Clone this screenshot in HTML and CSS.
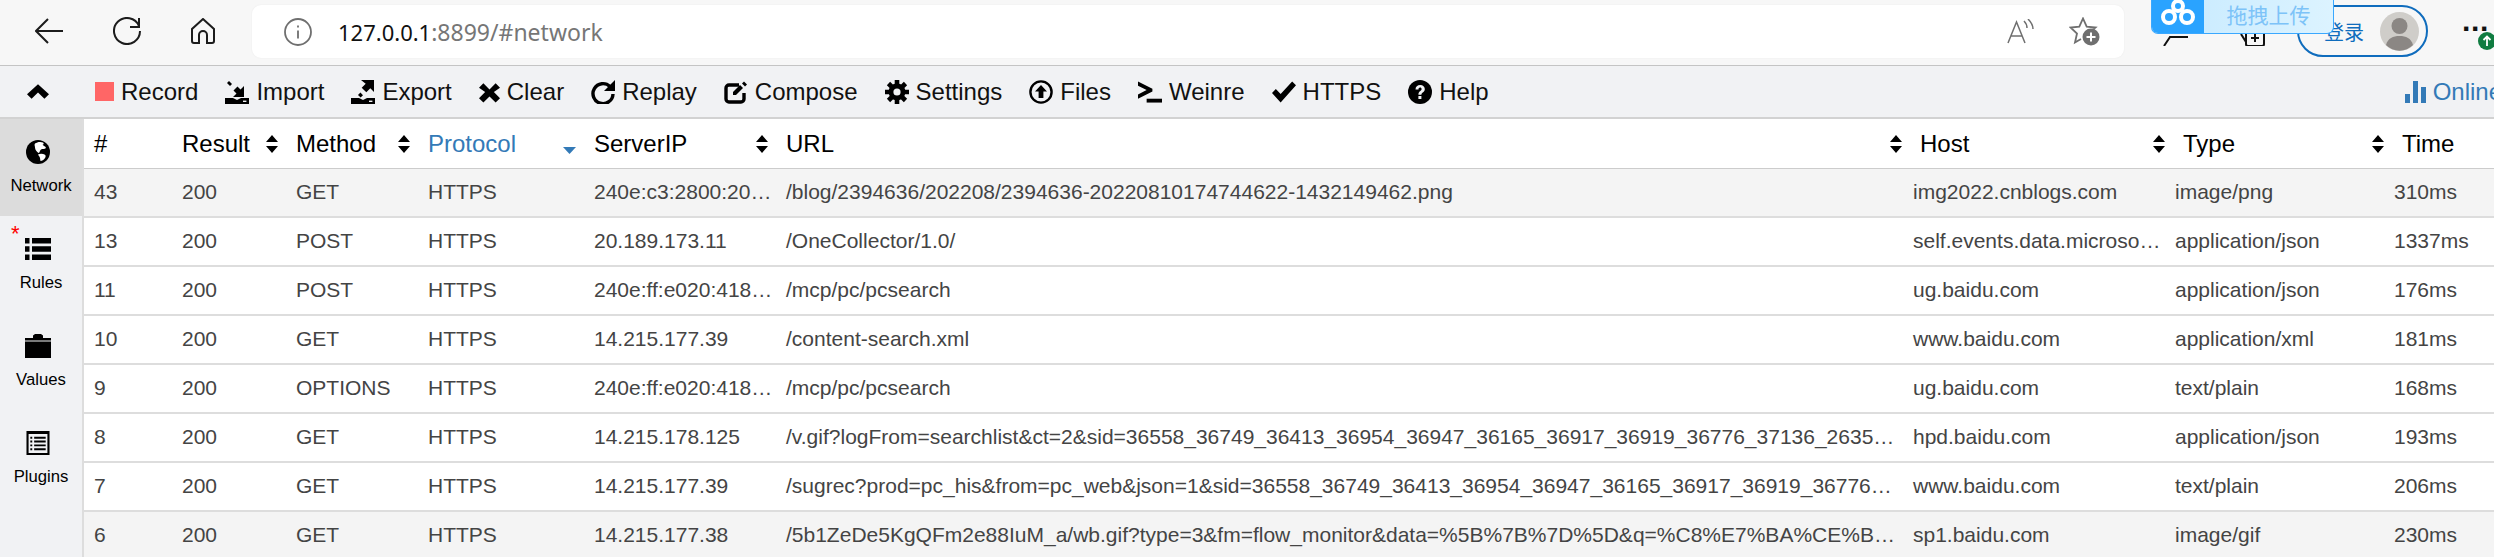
FILE: index.html
```html
<!DOCTYPE html>
<html lang="en">
<head>
<meta charset="utf-8">
<title>Whistle</title>
<link rel="stylesheet" href="styles.css">
</head>
<body>
<svg class="sprites" aria-hidden="true">
  <symbol id="i-chev" viewBox="0 0 24 16"><path d="M12 0 L24 11 L19 16 L12 9 L5 16 L0 11 Z"/></symbol>
  <symbol id="i-import" viewBox="0 0 24 24"><path d="M0 18h8l4 2 4-2h8v6H0z"/><rect x="18" y="20.6" width="3.4" height="1.4" fill="#f1f2f4"/><path d="M19 6v11H8l3.5-3.5-3-3 4-4 3 3z"/><path d="M2 3l2-2 3 3-2 2z"/></symbol>
  <symbol id="i-export" viewBox="0 0 24 24"><path d="M0 18h8l4 2 4-2h8v6H0z"/><rect x="18" y="20.6" width="3.4" height="1.4" fill="#f1f2f4"/><path d="M10 0h13v12l-3.7-3.7-4 4-4.6-4.6 4-4z"/><path d="M7 15l2.4-2.4 2.6 2.6-2.4 2.4z"/></symbol>
  <symbol id="i-x" viewBox="0 0 24 24"><path d="M5 2l7 7 7-7 5 5-7 5 7 7-5 5-7-7-7 7-5-5 7-7-7-5z"/></symbol>
  <symbol id="i-repeat" viewBox="0 0 24 24"><path d="M19 6.5A10 10 0 1 0 22 14" fill="none" stroke="#000" stroke-width="3.4"/><path d="M24 0v11H13z"/></symbol>
  <symbol id="i-edit" viewBox="0 0 24 24"><path d="M15 5H5a3 3 0 0 0-3 3v11a3 3 0 0 0 3 3h12a3 3 0 0 0 3-3v-6" fill="none" stroke="#000" stroke-width="3.4"/><path d="M9 12l7-7 3 3-7 7H9z"/><path d="M20 1.5l3 3-2 2-3-3z"/></symbol>
  <symbol id="i-cog" viewBox="0 0 24 24"><g stroke="#000" stroke-width="4.6"><path d="M12 0v24M0 12h24M3.5 3.5l17 17M20.5 3.5l-17 17"/></g><circle cx="12" cy="12" r="8.4"/><circle cx="12" cy="12" r="3.6" fill="#f1f2f4"/></symbol>
  <symbol id="i-upc" viewBox="0 0 24 24"><circle cx="12" cy="12" r="10.6" fill="none" stroke="#000" stroke-width="2.4"/><path d="M12 5l6 6.5h-3.6V18H9.600v-6.500H6z"/></symbol>
  <symbol id="i-console" viewBox="0 0 25 22"><path d="M0 0l15 7.500v3L0 18v-4.500L9 9 0 4.500z"/><rect x="9" y="18" width="16" height="4"/></symbol>
  <symbol id="i-check" viewBox="0 0 25 22"><path d="M0 12l4-4 5 5L21 0l4 4L9 22z"/></symbol>
  <symbol id="i-help" viewBox="0 0 24 24"><circle cx="12" cy="12" r="12"/><path d="M7.500 9.500C7.500 6.500 9.500 5 12.200 5c2.800 0 4.600 1.700 4.600 4 0 3.400-3.400 3.400-3.400 5.800h-3c0-3.800 3.200-3.900 3.200-5.800 0-.9-.6-1.500-1.500-1.500-1 0-1.600.7-1.600 1.900z" fill="#f1f2f4"/><rect x="10.400" y="16" width="3" height="3" fill="#f1f2f4"/></symbol>
  <symbol id="i-stats" viewBox="0 0 21 22"><path d="M0 13h5v9H0zM8 0h5v22H8zM16 6h5v16h-5z"/></symbol>
  <symbol id="i-globe" viewBox="0 0 24 24"><circle cx="12" cy="12" r="12"/><path d="M9 3.500c2-1.500 5.500-2 8-1 1.200 1 .6 2-.5 2.300 1.200 1.500 3 1.300 3.500 3.200-1.500 1.500-3.500.5-5 1.500-1.500 1-1 3-2.500 3.500-1.500-1-3.500-3-3.500-5.500C9 6 8 5 9 3.500z" fill="#fff"/><path d="M12 14.500c2-1 5-.8 7 .2 1 .8.800 2.300-.3 3.800-1 1.300-2.700 2.500-4.200 2.500-.5-1.500-.2-3-1-4.200-.6-.9-1.300-1.500-1.500-2.300z" fill="#fff"/></symbol>
  <symbol id="i-list" viewBox="0 0 26 24"><path d="M0 1h4.500v5.500H0zM7 1h19v5.500H7zM0 9.200h4.500v5.500H0zM7 9.200h19v5.500H7zM0 17.500h4.500V23H0zM7 17.500h19V23H7z"/></symbol>
  <symbol id="i-folder" viewBox="0 0 26 24"><path d="M0 4h8V1.500L10 0h6l2 1.500V4h8v2.500H0zM0 7.500h26V24H0z"/></symbol>
  <symbol id="i-listalt" viewBox="0 0 24 25"><path fill-rule="evenodd" d="M0 0h24v25H0zM2.200 3v20h19.600V3z"/><path d="M4 6h2v2H4zM8 6h12v2H8zM4 10h2v2H4zM8 10h12v2H8zM4 14h2v2H4zM8 14h12v2H8zM4 18h2v2H4zM8 18h12v2H8z"/></symbol>
  <symbol id="i-sort" viewBox="0 0 12 18"><path d="M6 0l6 7H0zM0 11h12l-6 7z"/></symbol>
  <symbol id="i-sortdown" viewBox="0 0 13 7"><path d="M0 0h13L6.500 7z"/></symbol>
</svg>

<header class="browser">
  <nav class="browser-nav">
    <svg class="nav-icon" viewBox="0 0 28 26"><path d="M28 13H1M13 1L1 13l12 12"/></svg>
    <svg class="nav-icon" viewBox="0 0 28 28"><path d="M26 9A13 13 0 1 0 27 14"/><path d="M26 1v9h-9"/></svg>
    <svg class="nav-icon home" viewBox="0 0 24 26"><path d="M12 1L1 11v12a2 2 0 0 0 2 2h5v-8a4 4 0 0 1 8 0v8h5a2 2 0 0 0 2-2V11z"/></svg>
  </nav>
  <div class="address">
    <svg class="addr-info" viewBox="0 0 28 28"><circle cx="14" cy="14" r="13"/><path d="M14 12.500v8M14 7.500v2"/></svg>
    <span class="addr-text"><b>127.0.0.1</b>:8899/#network</span>
    <svg class="addr-read" viewBox="0 0 28 25"><path d="M1 24L9.500 3 18 24M4 17h11M17 2c2 2 3 4 3 7M21 0c3 3 5 6 5 10"/></svg>
    <svg class="addr-star" viewBox="0 0 31 29"><path d="M21 15L26.500 10.500 17.700 9.700 14 1.500 10.300 9.700 1.500 10.500 8 16.500 6 25.500 12 22"/><circle cx="22" cy="20" r="8.500" class="star-dot"/><path d="M22 15.500v9M17.500 20h9" class="star-plus"/></svg>
  </div>
  <svg class="edge-icon edge-fav" viewBox="0 0 27 30"><path d="M1 30l6-9h18"/></svg>
  <svg class="edge-icon edge-coll" viewBox="0 0 25 30"><path d="M1 18l5 8"/><rect x="6" y="14" width="18" height="16" rx="2"/><path d="M15 18v8M11 22h8"/></svg>
  <div class="login">
    <span class="login-text">登录</span>
    <svg class="avatar" viewBox="0 0 39 39"><circle cx="19.500" cy="19.500" r="19.500" fill="#cfcdc9"/><circle cx="19.500" cy="14" r="8" fill="#8b8784"/><path d="M6 33c2-7 7-9 13.500-9S31 26 33 33a19 19 0 0 1-27 0z" fill="#8b8784"/></svg>
  </div>
  <div class="more">
    <span class="more-dots">···</span>
    <svg class="more-badge" viewBox="0 0 18 18"><circle cx="9" cy="9" r="9" fill="#107c41"/><path d="M9 14V4.500M5.500 8L9 4.500 12.500 8" fill="none" stroke="#fff" stroke-width="1.800"/></svg>
  </div>
  <div class="upload">
    <span class="upload-logo"><svg viewBox="0 0 34 26"><g fill="none" stroke="#fff" stroke-width="4"><circle cx="17" cy="6" r="5"/><circle cx="8" cy="17" r="6"/><circle cx="26" cy="17" r="6"/></g></svg></span>
    <span class="upload-text">拖拽上传</span>
  </div>
</header>

<div class="toolbar">
  <svg class="tool-chev"><use href="#i-chev"/></svg>
  <a class="tool"><span class="tool-rec"></span>Record</a>
  <a class="tool"><svg><use href="#i-import"/></svg>Import</a>
  <a class="tool"><svg><use href="#i-export"/></svg>Export</a>
  <a class="tool"><svg class="narrow"><use href="#i-x"/></svg>Clear</a>
  <a class="tool"><svg><use href="#i-repeat"/></svg>Replay</a>
  <a class="tool"><svg><use href="#i-edit"/></svg>Compose</a>
  <a class="tool"><svg><use href="#i-cog"/></svg>Settings</a>
  <a class="tool"><svg><use href="#i-upc"/></svg>Files</a>
  <a class="tool"><svg><use href="#i-console"/></svg>Weinre</a>
  <a class="tool"><svg><use href="#i-check"/></svg>HTTPS</a>
  <a class="tool"><svg><use href="#i-help"/></svg>Help</a>
  <a class="tool tool-online"><svg><use href="#i-stats"/></svg>Online</a>
</div>

<div class="workspace">
  <aside class="side">
    <a class="side-item active"><svg><use href="#i-globe"/></svg><span>Network</span></a>
    <a class="side-item"><i class="star">*</i><svg><use href="#i-list"/></svg><span>Rules</span></a>
    <a class="side-item"><svg><use href="#i-folder"/></svg><span>Values</span></a>
    <a class="side-item"><svg><use href="#i-listalt"/></svg><span>Plugins</span></a>
  </aside>
  <main class="net">
    <div class="net-head">
      <div class="th">#</div>
      <div class="th">Result<svg class="sort"><use href="#i-sort"/></svg></div>
      <div class="th">Method<svg class="sort"><use href="#i-sort"/></svg></div>
      <div class="th th-active">Protocol<svg class="sort-down"><use href="#i-sortdown"/></svg></div>
      <div class="th">ServerIP<svg class="sort"><use href="#i-sort"/></svg></div>
      <div class="th">URL<svg class="sort"><use href="#i-sort"/></svg></div>
      <div class="th">Host<svg class="sort"><use href="#i-sort"/></svg></div>
      <div class="th">Type<svg class="sort"><use href="#i-sort"/></svg></div>
      <div class="th">Time</div>
    </div>
    <div class="net-row shaded"><span>43</span><span>200</span><span>GET</span><span>HTTPS</span><span>240e:c3:2800:205::f0</span><span>/blog/2394636/202208/2394636-20220810174744622-1432149462.png</span><span>img2022.cnblogs.com</span><span>image/png</span><span>310ms</span></div>
    <div class="net-row"><span>13</span><span>200</span><span>POST</span><span>HTTPS</span><span>20.189.173.11</span><span>/OneCollector/1.0/</span><span>self.events.data.microsoft.com</span><span>application/json</span><span>1337ms</span></div>
    <div class="net-row"><span>11</span><span>200</span><span>POST</span><span>HTTPS</span><span>240e:ff:e020:418:0:ff:b0</span><span>/mcp/pc/pcsearch</span><span>ug.baidu.com</span><span>application/json</span><span>176ms</span></div>
    <div class="net-row"><span>10</span><span>200</span><span>GET</span><span>HTTPS</span><span>14.215.177.39</span><span>/content-search.xml</span><span>www.baidu.com</span><span>application/xml</span><span>181ms</span></div>
    <div class="net-row"><span>9</span><span>200</span><span>OPTIONS</span><span>HTTPS</span><span>240e:ff:e020:418:0:ff:b0</span><span>/mcp/pc/pcsearch</span><span>ug.baidu.com</span><span>text/plain</span><span>168ms</span></div>
    <div class="net-row"><span>8</span><span>200</span><span>GET</span><span>HTTPS</span><span>14.215.178.125</span><span>/v.gif?logFrom=searchlist&amp;ct=2&amp;sid=36558_36749_36413_36954_36947_36165_36917_36919_36776_37136_26350_37092_36802</span><span>hpd.baidu.com</span><span>application/json</span><span>193ms</span></div>
    <div class="net-row"><span>7</span><span>200</span><span>GET</span><span>HTTPS</span><span>14.215.177.39</span><span>/sugrec?prod=pc_his&amp;from=pc_web&amp;json=1&amp;sid=36558_36749_36413_36954_36947_36165_36917_36919_36776_37136_26350</span><span>www.baidu.com</span><span>text/plain</span><span>206ms</span></div>
    <div class="net-row shaded"><span>6</span><span>200</span><span>GET</span><span>HTTPS</span><span>14.215.177.38</span><span>/5b1ZeDe5KgQFm2e88IuM_a/wb.gif?type=3&amp;fm=flow_monitor&amp;data=%5B%7B%7D%5D&amp;q=%C8%E7%BA%CE%B2%E9%BF%B4%CD%F8%D2%B3</span><span>sp1.baidu.com</span><span>image/gif</span><span>230ms</span></div>
  </main>
</div>
</body>
</html>
```
FILE: styles.css
```css
* { box-sizing: border-box; }
html, body { margin: 0; padding: 0; }
body {
  width: 2494px;
  height: 557px;
  overflow: hidden;
  font-family: "Liberation Sans", Arial, sans-serif;
  background: #fff;
  color: #000;
  display: flex;
  flex-direction: column;
}
.sprites { display: none; }

/* browser chrome */
.browser {
  position: relative;
  flex: none;
  height: 66px;
  display: flex;
  align-items: flex-start;
  padding-left: 35px;
  background: #f7f7f7;
  border-bottom: 1px solid #c4c4c4;
  overflow: hidden;
}
.browser-nav { flex: none; display: flex; align-items: center; gap: 50px; height: 62px; margin-right: 37px; }
.nav-icon { width: 28px; height: 28px; fill: none; stroke: #1c1c1c; stroke-width: 2; }
.nav-icon.home { width: 24px; height: 26px; }
.address {
  flex: none;
  margin-top: 5px;
  width: 1872px;
  height: 53px;
  display: flex;
  align-items: center;
  padding: 0 24px 0 32px;
  background: #fff;
  border-radius: 9px;
  box-shadow: 0 0 2px rgba(0,0,0,.06);
}
.addr-info { width: 28px; height: 28px; fill: none; stroke: #6f6f6f; stroke-width: 1.800; margin-right: 26px; }
.addr-text { font-family: "Noto Sans", sans-serif; font-size: 23px; color: #767676; }
.addr-text b { font-weight: 400; font-size: 22px; color: #111; }
.addr-read { width: 28px; height: 25px; margin-left: auto; fill: none; stroke: #6f6f6f; stroke-width: 1.500; }
.addr-star { width: 31px; height: 29px; margin-left: 34px; fill: none; stroke: #6f6f6f; stroke-width: 1.800; }
.star-dot { fill: #6f6f6f; stroke: none; }
.star-plus { stroke: #fff; stroke-width: 2; }
.edge-icon { flex: none; width: 27px; height: 30px; fill: none; stroke: #111; stroke-width: 2; margin-top: 16px; }
.edge-fav { margin-left: 39px; }
.edge-coll { margin-left: 50px; width: 25px; }
.login {
  margin-left: 32px;
  margin-top: 5px;
  width: 131px;
  height: 52px;
  flex: none;
  display: flex;
  align-items: center;
  justify-content: space-between;
  padding: 0 7px 0 25px;
  border: 2px solid #0f6cbd;
  border-radius: 26px;
}
.login-text { font-family: "Noto Sans CJK SC", sans-serif; font-size: 20px; color: #0f6cbd; }
.avatar { width: 39px; height: 39px; }
.more { position: relative; flex: none; margin-left: 34px; width: 40px; height: 60px; }
.more-dots { display: block; font-size: 30px; font-weight: 700; line-height: 58px; letter-spacing: -1px; color: #111; }
.more-badge { position: absolute; left: 16px; top: 32px; width: 18px; height: 18px; }
.upload {
  position: absolute;
  left: 2151px;
  top: 0;
  width: 183px;
  height: 34px;
  display: flex;
  border: 1px solid #3aa8ff;
  border-top: 0;
  border-radius: 0 0 7px 7px;
  overflow: hidden;
  background: linear-gradient(90deg, #c6eaff, #dcf3ff);
}
.upload-logo { flex: none; width: 52px; background: #2aa3ff; display: flex; align-items: flex-start; justify-content: center; }
.upload-logo svg { width: 34px; height: 26px; }
.upload-text {
  flex: 1;
  text-align: center;
  font-family: "Noto Sans CJK SC", sans-serif;
  font-size: 21px;
  line-height: 28px;
  color: #7dc3f8;
}

/* toolbar */
.toolbar {
  flex: none;
  height: 53px;
  display: flex;
  align-items: center;
  gap: 27px;
  padding-left: 27px;
  background: #f1f2f4;
  border-bottom: 2px solid #d2d2d2;
  font-size: 24px;
  white-space: nowrap;
  overflow: hidden;
}
.tool { display: flex; align-items: center; gap: 7px; color: #111; }
.tool svg { width: 24px; height: 24px; flex: none; fill: #000; }
.tool svg.narrow { width: 21px; }
.tool-chev { flex: none; width: 22px; height: 15px; margin-right: 19px; fill: #000; }
.tool-rec { width: 19px; height: 19px; background: #ff6666; }
.tool-online { margin-left: auto; color: #337ab7; margin-right: -8px; }
.tool-online svg { fill: #337ab7; width: 21px; }

/* workspace */
.workspace { flex: 1; display: flex; min-height: 0; }
.side {
  flex: none;
  width: 84px;
  background: #f1f2f4;
  border-right: 2px solid #ddd;
  display: flex;
  flex-direction: column;
}
.side-item {
  position: relative;
  height: 97px;
  display: flex;
  flex-direction: column;
  align-items: center;
  padding-top: 21px;
  gap: 12px;
  font-size: 16.700px;
  color: #000;
}
.side-item.active { background: #dcdcdc; }
.side-item svg { width: 26px; height: 24px; fill: #000; margin-right: 7px; }
.side-item span { line-height: 20px; }
.star { position: absolute; left: 11px; top: 7px; color: #f00; font-style: normal; font-size: 22px; line-height: 22px; }

/* network table */
.net { flex: 1; min-width: 0; }
.net-head, .net-row { display: grid; }
.net-head {
  grid-template-columns: 88px 114px 132px 166px 192px 1134px 263px 219px 102px;
  height: 50px;
  border-bottom: 1px solid #ccc;
  font-size: 24px;
}
.th { display: flex; align-items: center; justify-content: space-between; padding: 0 8px 0 10px; white-space: nowrap; }
.th-active { color: #337ab7; }
.sort { width: 12px; height: 18px; fill: #000; flex: none; margin-top: 1px; }
.sort-down { width: 13px; height: 7px; fill: #337ab7; flex: none; margin-top: 13px; }
.net-row {
  grid-template-columns: 88px 114px 132px 166px 192px 1127px 262px 219px 110px;
  height: 49px;
  border-bottom: 2px solid #ddd;
  font-size: 21px;
  line-height: 46px;
  color: #444;
}
.net-row.shaded { background: #f4f4f4; }
.net-row span { padding: 0 10px; overflow: hidden; white-space: nowrap; text-overflow: ellipsis; }
.net-row span:nth-child(5) { padding-right: 3px; }
.net-row span:nth-child(6) { padding-right: 2px; }
.net-row span:nth-child(7) { padding-right: 3px; }
```
